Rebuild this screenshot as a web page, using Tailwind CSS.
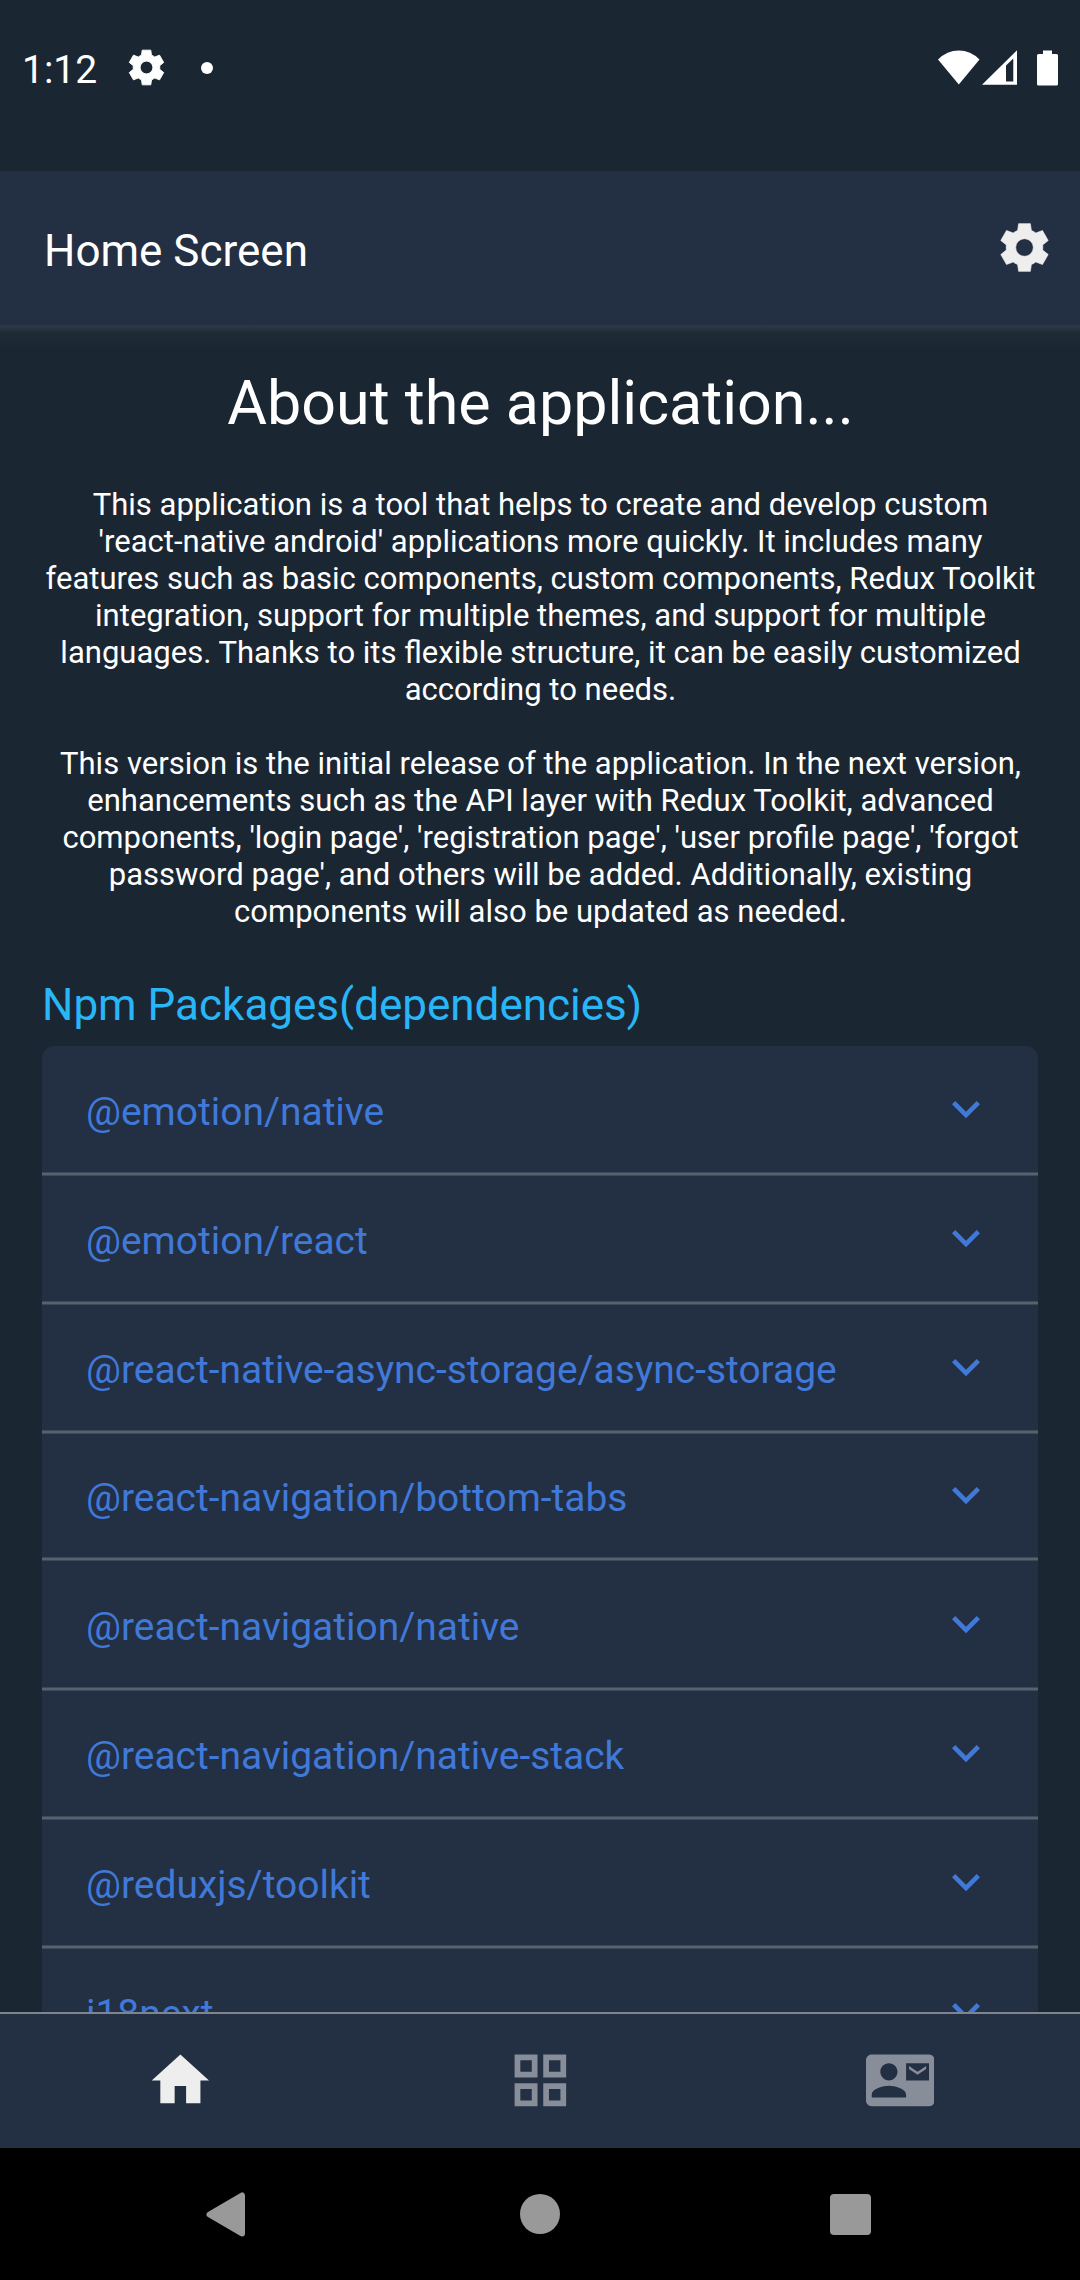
<!DOCTYPE html>
<html lang="en">
<head>
<meta charset="utf-8">
<title>Home Screen</title>
<script src="https://cdn.jsdelivr.net/npm/@tailwindcss/browser@4"></script>
</head>
<body class="bg-[#1b2633]">
<svg class="hidden">
  <defs>
    <path id="gear" fill-rule="evenodd" stroke-linejoin="round" d="M-21-52L-18-73H18L21-52A56 56 0 0 1 34.5-44.2L55-52L72.5-21.4L55.5-7.8A56 56 0 0 1 55.5 7.8L72.5 21.4L55 52L34.5 44.2A56 56 0 0 1 21 52L18 73H-18L-21 52A56 56 0 0 1-34.5 44.2L-55 52L-72.5 21.4L-55.5 7.8A56 56 0 0 1-55.5-7.8L-72.5-21.4L-55-52L-34.5-44.2A56 56 0 0 1-21-52ZM0-27A27 27 0 1 0 0 27A27 27 0 1 0 0-27Z"/>
    <path id="chevron" d="M16.59 8.59L12 13.17 7.41 8.59 6 10l6 6 6-6z"/>
  </defs>
</svg>
<div class="flex h-[2280px] w-[1080px] flex-col overflow-hidden bg-[#1b2633] font-['Roboto',sans-serif] text-white">

  <!-- Status bar -->
  <div class="flex h-[171px] shrink-0 items-start justify-between pt-[47px] pr-[22px] pl-[22px]">
    <div class="flex h-[41px] items-center">
      <span class="w-[106px] pt-[5px] text-[39px] leading-[41px]">1:12</span>
      <svg class="size-[37px]" viewBox="-78 -78 156 156" fill="#fff" stroke="#fff" stroke-width="4"><use href="#gear"/></svg>
      <span class="ml-9 size-3 rounded-full bg-white"></span>
    </div>
    <div class="flex h-[41px] items-center">
      <svg class="h-[35px] w-[42px]" viewBox="0 0 42 35" fill="#fff"><path d="M0 9.5Q9 .5 20.8 .5T41.5 9.5L20.8 34.5Z"/></svg>
      <svg class="ml-0.5 h-[35px] w-[35px]" viewBox="0 0 35 35" fill="#fff" fill-rule="evenodd"><path d="M0 34.7L35 .3V34.7ZM24 15.5V31.5H31.3V8.5Z"/></svg>
      <svg class="ml-5 h-9 w-[21px]" viewBox="0 0 21 36" fill="#fff"><path d="M6 .5h9V4h4.5q1.5 0 1.5 1.5V34q0 1.5-1.5 1.5h-18Q0 35.5 0 34V5.5Q0 4 1.5 4H6z"/></svg>
    </div>
  </div>

  <!-- App header -->
  <header class="flex h-[154px] shrink-0 items-center justify-between bg-[#232f42] pr-[30px] pl-11">
    <h1 class="pt-[6px] text-[44px] leading-[52px]">Home Screen</h1>
    <svg class="mb-px size-[51px]" viewBox="-78 -78 156 156" fill="#eee" stroke="#eee" stroke-width="2"><use href="#gear"/></svg>
  </header>

  <!-- Scrolling content -->
  <main class="flex h-[1687px] shrink-0 flex-col overflow-hidden">
    <div class="h-6 shrink-0 bg-linear-to-b from-[#303a46] via-[#1f2a37] via-35% to-[#1b2633]"></div>
    <h2 class="mt-[18px] shrink-0 pl-px text-center text-[61px] leading-[72px]">About the application...</h2>
    <div class="mt-[47px] flex shrink-0 flex-col gap-[37px] pl-px text-center text-[31.04px] leading-[37px] whitespace-nowrap">
      <p>This application is a tool that helps to create and develop custom<br>'react-native android' applications more quickly. It includes many<br>features such as basic components, custom components, Redux Toolkit<br>integration, support for multiple themes, and support for multiple<br>languages. Thanks to its flexible structure, it can be easily customized<br>according to needs.</p>
      <p>This version is the initial release of the application. In the next version,<br>enhancements such as the API layer with Redux Toolkit, advanced<br>components, 'login page', 'registration page', 'user profile page', 'forgot<br>password page', and others will be added. Additionally, existing<br>components will also be updated as needed.</p>
    </div>
    <h3 class="mt-[49px] shrink-0 pl-[42px] text-[44px] leading-[52px] text-[#29b6f6]">Npm Packages(dependencies)</h3>
    <ul id="packages" class="mx-[42px] mt-[15px] shrink-0 overflow-hidden rounded-t-xl bg-[#232f42] text-[38.95px] leading-[46px] text-[#4079d8]"></ul>
  </main>

  <!-- Tab bar -->
  <nav class="grid h-[136px] shrink-0 grid-cols-3 justify-items-center border-t-2 border-[#7f858e] bg-[#232f42] pt-8">
    <svg class="size-[68.75px]" viewBox="0 0 24 24" fill="#eee"><path d="M10 20v-6h4v6h5v-8h3L12 3 2 12h3v8z"/></svg>
    <svg class="size-[68.75px]" viewBox="0 0 24 24" fill="#878e99" fill-rule="evenodd"><path d="M3 3v8h8V3zm6 6H5V5h4zM3 13v8h8v-8zm6 6H5v-4h4zM13 3v8h8V3zm6 6h-4V5h4zM13 13v8h8v-8zm6 6h-4v-4h4z"/></svg>
    <svg class="size-[68.75px]" viewBox="0 0 24 24" fill="#878e99"><path d="M21 8V7l-3 2-3-2v1l3 2 3-2zm1-5H2C.9 3 0 3.9 0 5v14c0 1.1.9 2 2 2h20c1.1 0 1.99-.9 1.99-2L24 5c0-1.1-.9-2-2-2zM8 6c1.66 0 3 1.34 3 3s-1.34 3-3 3-3-1.34-3-3 1.34-3 3-3zm6 12H2v-1c0-2 4-3.1 6-3.1s6 1.1 6 3.1v1zm8-6h-8V6h8v6z"/></svg>
  </nav>

  <!-- System navigation -->
  <div class="flex h-[132px] shrink-0 items-center justify-between bg-black pr-[209px] pl-[206px]">
    <svg class="h-[45px] w-[39px]" viewBox="0 0 39 45" fill="#999" stroke="#999" stroke-width="6" stroke-linejoin="round"><path d="M3.5 22.5L36 3.5V41.5Z"/></svg>
    <span class="ml-1 size-10 rounded-full bg-[#999]"></span>
    <span class="size-[41px] rounded bg-[#999]"></span>
  </div>
</div>
<script>
  const packages = ['@emotion/native', '@emotion/react', '@react-native-async-storage/async-storage', '@react-navigation/bottom-tabs', '@react-navigation/native', '@react-navigation/native-stack', '@reduxjs/toolkit', 'i18next'];
  document.getElementById('packages').innerHTML = packages.map((name) => `
    <li class="flex h-[129px] flex-col first:h-[130px] nth-4:h-[127px] nth-5:h-[130px]">
      <div class="flex min-h-0 flex-1 items-center justify-between pr-11 pl-11">
        <span class="pt-[5px]">${name}</span>
        <svg class="mb-px size-14" viewBox="0 0 24 24" fill="#4079d8"><use href="#chevron"/></svg>
      </div>
      <div class="h-1 shrink-0 border-y border-[#3f4957] bg-[#586170]"></div>
    </li>`).join('');
</script>
</body>
</html>
